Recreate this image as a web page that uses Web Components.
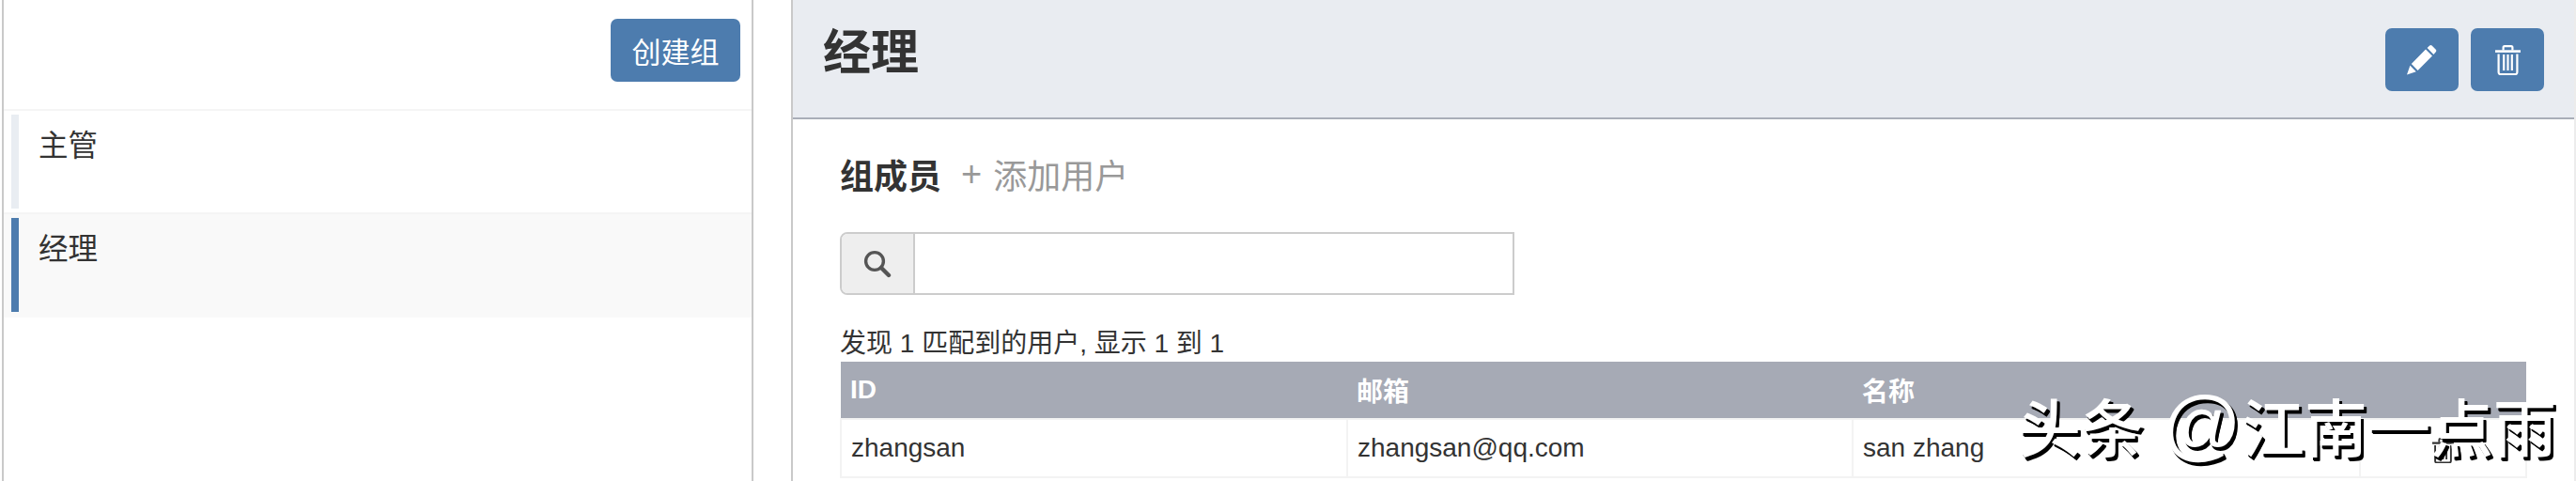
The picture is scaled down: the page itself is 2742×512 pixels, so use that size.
<!DOCTYPE html>
<html lang="zh-CN">
<head>
<meta charset="utf-8">
<title>用户组</title>
<style>
  html, body { margin: 0; height: 512px; overflow: hidden; background: #fff; }
  body { font: 28px "Liberation Sans", "Noto Sans CJK SC", sans-serif; color: #333; }
</style>
</head>
<body>
<group-page>
  <group-sidebar slot="side">
    <group-item>主管</group-item>
    <group-item selected>经理</group-item>
  </group-sidebar>
  <group-detail slot="main" title-text="经理">
    <member-search></member-search>
    <member-table></member-table>
  </group-detail>
</group-page>
<water-mark>头条 <span style="font-size:84px;line-height:0">@</span>江南一点雨</water-mark>

<script>
// icons are all drawn in currentColor so they work on buttons and in table cells
const ICONS = {
  pencil: { w: 32, h: 32, d: `<path fill="currentColor" d="M0 31.5 3.4 21.8 9.8 28.2ZM4.8 20 20 4.6 27 11.6 11.6 27ZM21.6 3 24.2.6Q25.4-.4 26.6.6L30.8 4.8Q31.8 6 30.8 7.2L28.4 10Z"/>` },
  trash: { w: 27, h: 32, d: `<g fill="none" stroke="currentColor" stroke-width="2.2"><path d="M0 6.6H27" stroke-width="2.6"/><path d="M8.6 5.5V2.6Q8.6 1.1 10 1.1H17Q18.4 1.1 18.4 2.6V5.5"/><path d="M3.6 9.5V29Q3.6 31 5.6 31H21.4Q23.4 31 23.4 29V9.5"/><path d="M9.2 10V27M13.5 10V27M17.8 10V27"/></g>` },
  search: { w: 30, h: 30, d: `<g fill="none" stroke="currentColor"><circle cx="12" cy="12" r="9.4" stroke-width="3.4"/><path d="M19 19 27 27" stroke-width="4.4" stroke-linecap="round"/></g>` }
};

class UiIcon extends HTMLElement {
  constructor() {
    super();
    this.attachShadow({ mode: "open" });
  }
  connectedCallback() {
    const icon = ICONS[this.getAttribute("name")];
    const scale = parseFloat(this.getAttribute("scale") || 1);
    this.shadowRoot.innerHTML = `
      <style>:host { display: inline-flex; } svg { display: block; }</style>
      <svg width="${icon.w * scale}" height="${icon.h * scale}" viewBox="0 0 ${icon.w} ${icon.h}">${icon.d}</svg>`;
  }
}
customElements.define("ui-icon", UiIcon);

const tplButton = document.createElement("template");
tplButton.innerHTML = `
<style>
  :host { display: inline-flex; }
  button {
    display: flex; align-items: center; justify-content: center;
    height: 67px; width: 138px; padding: 0; border: 0; border-radius: 7px;
    background: #4d7cae; color: #fff;
    font: 31px "Liberation Sans", "Noto Sans CJK SC", sans-serif;
  }
  :host([square]) button { width: 78px; }
</style>
<button type="button"><slot></slot></button>`;
class UiButton extends HTMLElement {
  constructor() {
    super();
    this.attachShadow({ mode: "open" }).appendChild(tplButton.content.cloneNode(true));
  }
}
customElements.define("ui-button", UiButton);

const tplPage = document.createElement("template");
tplPage.innerHTML = `
<style>
  :host { display: grid; grid-template-columns: 800px 1fr; column-gap: 40px; height: 512px; padding-left: 2px; box-sizing: border-box; }
</style>
<slot name="side"></slot>
<slot name="main"></slot>`;
class GroupPage extends HTMLElement {
  constructor() {
    super();
    this.attachShadow({ mode: "open" }).appendChild(tplPage.content.cloneNode(true));
  }
}
customElements.define("group-page", GroupPage);

const tplSidebar = document.createElement("template");
tplSidebar.innerHTML = `
<style>
  :host { display: block; width: 800px; height: 512px; box-sizing: border-box; border-left: 2px solid #c9c9c9; border-right: 2px solid #c9c9c9; }
  .bar { display: flex; justify-content: flex-end; height: 116px; padding: 20px 12px 0 0; box-sizing: border-box; }
</style>
<div class="bar"><ui-button>创建组</ui-button></div>
<slot></slot>`;
class GroupSidebar extends HTMLElement {
  constructor() {
    super();
    this.attachShadow({ mode: "open" }).appendChild(tplSidebar.content.cloneNode(true));
  }
}
customElements.define("group-sidebar", GroupSidebar);

const tplItem = document.createElement("template");
tplItem.innerHTML = `
<style>
  :host { display: block; border-top: 2px solid #f5f5f5; font-size: 31.5px; color: #333; }
  .row { display: flex; gap: 21px; height: 100px; padding: 4px 0 4px 8px; }
  .mark { width: 8px; background: #e9edf2; flex: none; }
  .text { line-height: 46px; padding-top: 10px; }
  :host([selected]) { background: #f9f9f9; }
  :host([selected]) .row { padding-bottom: 6px; }
  :host([selected]) .mark { background: #4d7cae; }
</style>
<div class="row"><span class="mark"></span><span class="text"><slot></slot></span></div>`;
class GroupItem extends HTMLElement {
  constructor() {
    super();
    this.attachShadow({ mode: "open" }).appendChild(tplItem.content.cloneNode(true));
  }
}
customElements.define("group-item", GroupItem);

const tplDetail = document.createElement("template");
tplDetail.innerHTML = `
<style>
  :host { display: block; height: 512px; box-sizing: border-box; border-left: 2px solid #c9c9c9; border-right: 2px solid #ececec; }
  header {
    display: flex; justify-content: space-between; height: 127px; box-sizing: border-box;
    padding: 30px 32px 0 32px; background: #e9ecf1; border-bottom: 2px solid #a9aeb8;
  }
  h2 { margin: 0; padding-top: 1px; font-size: 51px; line-height: 52px; font-weight: bold; color: #333; }
  .tools { display: flex; gap: 13px; }
  section { padding: 33px 50px 0 50px; }
  .heading { display: flex; align-items: center; height: 50px; font-size: 36px; }
  .heading b { color: #333; }
  .add { color: #999; margin-left: 21px; display: flex; align-items: center; gap: 12px; }
  .plus { font-size: 38px; }
</style>
<header>
  <h2></h2>
  <div class="tools">
    <ui-button square><ui-icon name="pencil"></ui-icon></ui-button>
    <ui-button square><ui-icon name="trash"></ui-icon></ui-button>
  </div>
</header>
<section>
  <div class="heading"><b>组成员</b><span class="add"><span class="plus">+</span><span>添加用户</span></span></div>
  <slot></slot>
</section>`;
class GroupDetail extends HTMLElement {
  constructor() {
    super();
    this.attachShadow({ mode: "open" }).appendChild(tplDetail.content.cloneNode(true));
    this.shadowRoot.querySelector("h2").textContent = this.getAttribute("title-text");
  }
}
customElements.define("group-detail", GroupDetail);

const tplSearch = document.createElement("template");
tplSearch.innerHTML = `
<style>
  :host { display: flex; width: 718px; height: 67px; margin-top: 37px; box-sizing: border-box; border: 2px solid #ccc; border-radius: 8px 0 0 8px; }
  .addon { width: 76px; flex: none; display: flex; align-items: center; justify-content: center; background: #eee; border-right: 2px solid #ccc; border-radius: 6px 0 0 6px; color: #555; }
  input { flex: 1; min-width: 0; border: 0; padding: 0 12px; outline: 0; background: #fff; font: inherit; }
</style>
<span class="addon"><ui-icon name="search"></ui-icon></span>
<input type="text">`;
class MemberSearch extends HTMLElement {
  constructor() {
    super();
    this.attachShadow({ mode: "open" }).appendChild(tplSearch.content.cloneNode(true));
  }
}
customElements.define("member-search", MemberSearch);

const tplTable = document.createElement("template");
tplTable.innerHTML = `
<style>
  :host { display: block; margin-top: 29px; font-size: 28px; color: #333; }
  p { margin: 0; height: 42px; line-height: 46px; }
  table { width: 1794px; table-layout: fixed; border-collapse: collapse; }
  th { height: 60px; padding: 0 10px; background: #a6aab5; color: #fff; font-weight: bold; text-align: left; }
  td { height: 62px; padding: 0 10px; border: 2px solid #f3f3f3; box-sizing: border-box; }
  td.act { text-align: center; color: #333; padding-top: 2px; }
  td.act ui-icon { vertical-align: middle; }
</style>
<p>发现 1 匹配到的用户, 显示 1 到 1</p>
<table>
  <colgroup><col style="width:539px"><col style="width:538px"><col style="width:540px"><col style="width:177px"></colgroup>
  <thead><tr><th>ID</th><th>邮箱</th><th>名称</th><th></th></tr></thead>
  <tbody><tr><td>zhangsan</td><td>zhangsan@qq.com</td><td>san zhang</td><td class="act"><ui-icon name="trash" scale="0.85"></ui-icon></td></tr></tbody>
</table>`;
class MemberTable extends HTMLElement {
  constructor() {
    super();
    this.attachShadow({ mode: "open" }).appendChild(tplTable.content.cloneNode(true));
  }
}
customElements.define("member-table", MemberTable);

// sits over the table, like the image watermark in the screenshot
const tplMark = document.createElement("template");
tplMark.innerHTML = `
<style>
  :host { position: absolute; left: 2148px; top: 410px; font-size: 67px; font-weight: 500; line-height: 96px; white-space: nowrap; color: #fff; text-shadow: 2px 3px 0 #000, 3px 3px 0 #000, 3px 4px 0 #000; }
</style>
<slot></slot>`;
class WaterMark extends HTMLElement {
  constructor() {
    super();
    this.attachShadow({ mode: "open" }).appendChild(tplMark.content.cloneNode(true));
  }
}
customElements.define("water-mark", WaterMark);
</script>
</body>
</html>
